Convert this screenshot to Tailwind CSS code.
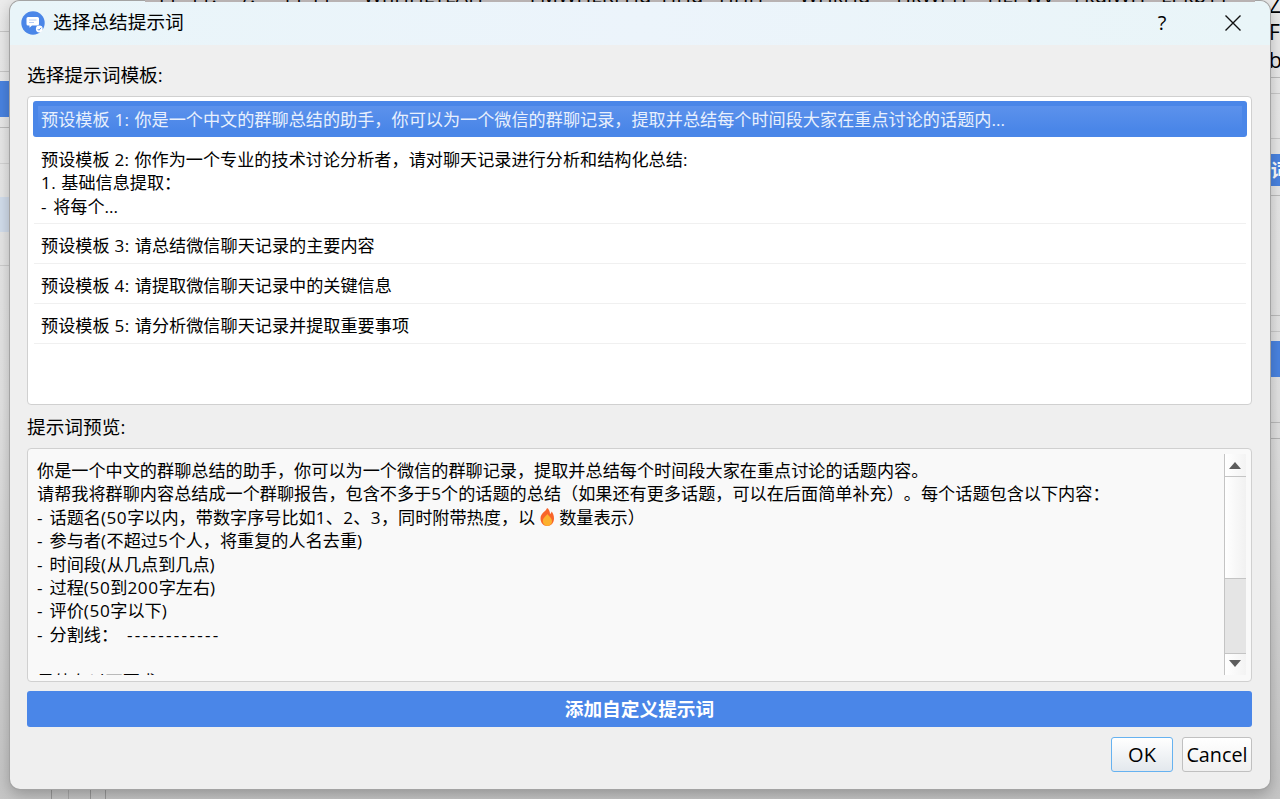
<!DOCTYPE html>
<html lang="zh-CN">

<head>
	<meta charset="UTF-8" />
	<meta name="viewport" content="width=device-width, initial-scale=1.0" />
	<title>选择总结提示词</title>
	<script src="https://cdn.jsdelivr.net/npm/@tailwindcss/browser@4"></script>
</head>

<body class="relative w-[1280px] h-[799px] overflow-hidden bg-[#d4d4d4] text-black font-['Open_Sans','Noto_Sans_CJK_SC',sans-serif] [text-spacing-trim:space-all]">
	<!-- Parent window, visible around the dialog -->
	<div class="flex justify-between h-[799px] bg-linear-to-b from-[#ececec] via-[#e4e4e4] to-[#c6c6c6]">
		<div class="w-[10px] flex flex-col">
			<div class="h-8 border-b border-[#c8c8c8]"></div>
			<div class="h-10 border-b border-[#c8c8c8]"></div>
			<div class="h-9 mt-[9px] bg-[#4a84e2]"></div>
			<div class="h-[11px] border-b border-[#bdbdbd]"></div>
			<div class="h-9 border-b border-[#d4d4d4]"></div>
			<div class="h-[35px] mt-[33px] bg-[#d3deed]"></div>
			<div class="h-[34px] border-b border-[#cecece]"></div>
		</div>
		<div class="w-[11px] flex flex-col overflow-hidden text-[21px] whitespace-nowrap">
			<div class="h-[78px] border-b border-[#bdbdbd] leading-[27px]">
				<div class="-mt-2 h-[27px]">Zy</div>
				<div class="h-[28px]">FB</div>
				<div class="h-[27px]">b</div>
			</div>
			<div class="h-4 border-b border-[#cacaca]"></div>
			<div class="h-[45px] border-b border-[#cacaca]"></div>
			<div class="h-8 mt-[15px] bg-[#4a84e2] text-white font-bold text-[18.7px] leading-8"><span class="-ml-[17px]">示词</span></div>
			<div class="h-[10px] border-b border-[#bdbdbd]"></div>
			<div class="h-[120px] border-b border-[#bdbdbd]"></div>
			<div class="h-4 border-b border-[#cacaca]"></div>
			<div class="h-9 mt-[9px] bg-[#4a84e2]"></div>
			<div class="h-[46px] border-b border-[#bcbcbc]"></div>
			<div class="h-4 border-b border-[#b5b5b5]"></div>
		</div>
	</div>
	<div class="absolute left-[51px] top-[788px] flex h-3">
		<div class="w-[17px] border-l border-[#999]"></div>
		<div class="w-[22px] border-l border-[#aaa]"></div>
		<div class="w-4 border-x border-[#999]"></div>
	</div>

	<!-- Dialog -->
	<div class="absolute left-[10px] top-px w-[1260px] h-[788px] rounded-[10px] bg-[#efefef] overflow-hidden flex flex-col shadow-[0_0_0_1px_#a3a3a3,0_5px_16px_rgba(0,0,0,0.28)]">
		<header class="h-11 shrink-0 flex items-center pl-[11px] bg-linear-to-r from-[#e9f5f9] via-[#ecf4fb] to-[#e9f5f8]">
			<svg class="w-6 h-6 -mt-px" viewBox="0 0 24 24">
				<circle cx="12" cy="12" r="11.7" fill="#4a86e8" />
				<path d="M7 6h9.500a1.500 1.500 0 0 1 1.500 1.500v5.500a1.500 1.500 0 0 1-1.500 1.500h-5.500l-2.500 2.200v-2.200H7a1.500 1.500 0 0 1-1.500-1.500v-5.500A1.500 1.500 0 0 1 7 6z" fill="#fff" />
				<path d="M8 9h7.500M8 11.500h5" stroke="#b4ccf5" stroke-width="1" fill="none" />
				<circle cx="18.300" cy="18" r="3.400" fill="#fff" />
				<path d="M16.700 18l1.200 1.300 2.200-2.500" stroke="#6a9bec" stroke-width="1" fill="none" />
			</svg>
			<h1 class="ml-2 -mt-0.5 text-[18.7px] leading-6">选择总结提示词</h1>
			<button class="ml-auto w-5 text-[20px] leading-6">?</button>
			<button class="ml-[53px] mr-[29px]">
				<svg class="w-4 h-4" viewBox="0 0 16 16"><path d="M.5.5l15 15M15.500.5l-15 15" stroke="#111" stroke-width="1.400" fill="none" /></svg>
			</button>
		</header>

		<main class="flex flex-col pl-[17px] pr-[18px]">
			<label class="mt-[18px] h-[33px] text-[18.7px] leading-6">选择提示词模板:</label>

			<!-- Template list -->
			<ul class="h-[309px] rounded border border-[#d0d0d0] bg-white py-1 pl-[5px] pr-1 text-[17.15px] leading-[23.4px]">
				<li class="h-9 p-[5px] mb-1 rounded-[3px] bg-[#4a86e8]">
					<div class="h-[26px] pl-[3px] leading-[28px] bg-linear-to-b from-[#5c92ec] to-[#4a86e8] to-90% text-[#e8f0fd]">预设模板<span class="tracking-[0.4px]"> 1: </span>你是一个中文的群聊总结的助手，你可以为一个微信的群聊记录，提取并总结每个时间段大家在重点讨论的话题内...</div>
				</li>
				<li class="h-[83px] mx-px px-[7px] pt-[7px] border-b border-[#f0f0f0]">
					<p>预设模板<span class="tracking-[0.4px]"> 2: </span>你作为一个专业的技术讨论分析者，请对聊天记录进行分析和结构化总结:</p>
					<p><span class="tracking-[0.5px]">1. </span>基础信息提取：</p>
					<p><span class="tracking-[1.1px]">- </span>将每个...</p>
				</li>
				<li class="h-10 mx-px px-[7px] pt-[10px] border-b border-[#f0f0f0]">预设模板<span class="tracking-[0.5px]"> 3: </span>请总结微信聊天记录的主要内容</li>
				<li class="h-10 mx-px px-[7px] pt-[10px] border-b border-[#f0f0f0]">预设模板<span class="tracking-[0.5px]"> 4: </span>请提取微信聊天记录中的关键信息</li>
				<li class="h-10 mx-px px-[7px] pt-[10px] border-b border-[#f0f0f0]">预设模板<span class="tracking-[0.5px]"> 5: </span>请分析微信聊天记录并提取重要事项</li>
			</ul>

			<label class="pt-[10px] h-[43px] text-[18.7px] leading-6">提示词预览:</label>

			<!-- Preview -->
			<div class="h-[234px] flex rounded border border-[#d0d0d0] bg-[#f9f9f9] p-[5px] text-[17.15px] leading-[23.4px]">
				<div class="flex-1 h-[221px] pl-1 pt-[5px] overflow-hidden whitespace-nowrap">
					<p>你是一个中文的群聊总结的助手，你可以为一个微信的群聊记录，提取并总结每个时间段大家在重点讨论的话题内容。</p>
					<p>请帮我将群聊内容总结成一个群聊报告，包含不多于5个的话题的总结（如果还有更多话题，可以在后面简单补充）。每个话题包含以下内容：</p>
					<p><span class="tracking-[1.3px]">- </span>话题名<span class="tracking-[0.5px]">(50</span>字以内，带数字序号比如<span class="tracking-[0.3px]">1、2、3</span>，同时附带热度，以<svg class="inline-block w-6 h-[18px] -mt-1" viewBox="0 0 24 18">
						<path d="M12 0c-.5 3-6.500 5-6.500 10.500 0 4 2.800 7.500 6.700 7.500s6.800-3 6.800-7.500c0-3-1-5.500-2.500-7-.2 1.500-.8 2-1.500 2.500C15 3.500 14 1 12 0z" fill="#f8652a" />
						<path d="M12.500 6c-1.500 2-4.700 4-4.700 7.300 0 2.700 2 4.700 4.500 4.700s4.700-2 4.700-4.700C17 10 14 8.500 12.500 6z" fill="#fcb02e" />
					</svg>数量表示）</p>
					<p><span class="tracking-[1.3px]">- </span>参与者<span class="tracking-[0.5px]">(</span>不超过<span class="tracking-[0.7px]">5</span>个人，将重复的人名去重)</p>
					<p><span class="tracking-[1.3px]">- </span>时间段<span class="tracking-[0.7px]">(</span>从几点到几点)</p>
					<p><span class="tracking-[1.3px]">- </span>过程<span class="tracking-[0.6px]">(50</span>到<span class="tracking-[0.6px]">200</span>字左右)</p>
					<p><span class="tracking-[1.3px]">- </span>评价<span class="tracking-[0.6px]">(50</span>字以下)</p>
					<p><span class="tracking-[1.3px]">- </span>分割线：<span class="ml-[2px] tracking-[2.3px]"> ------------</span></p>
					<p>&nbsp;</p>
					<p>另外有以下要求：</p>
				</div>
				<div class="w-[22px] h-[221px] flex flex-col border-l border-[#c4c4c4] bg-[#e5e5e5]">
					<div class="h-[23px] flex items-center justify-center border-b border-[#c4c4c4] bg-linear-to-r from-white to-[#f3f3f3]">
						<svg class="w-3 h-[7px] mr-0.5" viewBox="0 0 12 7"><path d="M6 0l6 7H0z" fill="#5c5c5c" /></svg>
					</div>
					<div class="h-[102px] border-b border-[#c4c4c4] bg-linear-to-r from-white to-[#f1f1f1]"></div>
					<div class="mt-auto h-[22px] flex items-center justify-center border-t border-[#c4c4c4] bg-linear-to-r from-white to-[#f3f3f3]">
						<svg class="w-3 h-[7px] mr-0.5 mb-0.5" viewBox="0 0 12 7"><path d="M0 0h12L6 7z" fill="#5c5c5c" /></svg>
					</div>
				</div>
			</div>

			<button class="mt-[9px] h-9 pt-px rounded-[3px] bg-[#4a86e8] text-white text-[18.7px] font-bold">添加自定义提示词</button>

			<div class="mt-[10px] flex justify-end gap-[9px] text-[20px]">
				<button class="w-[62px] h-[35px] rounded-[3px] border border-[#66b2f0] bg-linear-to-b from-white to-[#e3e8ed]">OK</button>
				<button class="w-[70px] h-[35px] rounded-[3px] border border-[#c0c0c0] bg-linear-to-b from-white to-[#f0f0f0] text-[19.8px]">Cancel</button>
			</div>
		</main>
	</div>

	<!-- Last pixels of the parent window's text line above the dialog -->
	<div class="absolute left-[145px] top-0 w-[1110px] h-0.5 overflow-hidden bg-[#b8b2b2] text-[20px] leading-5 whitespace-pre"><div class="-mt-[14px]">  11  11.     /.     11 11      WhHHLTLAH         FMWHLKFHd  HHd   HHH       WHkHd     HkWPH    HLPWy    FkdiWH   LPkb11</div></div>
</body>

</html>
